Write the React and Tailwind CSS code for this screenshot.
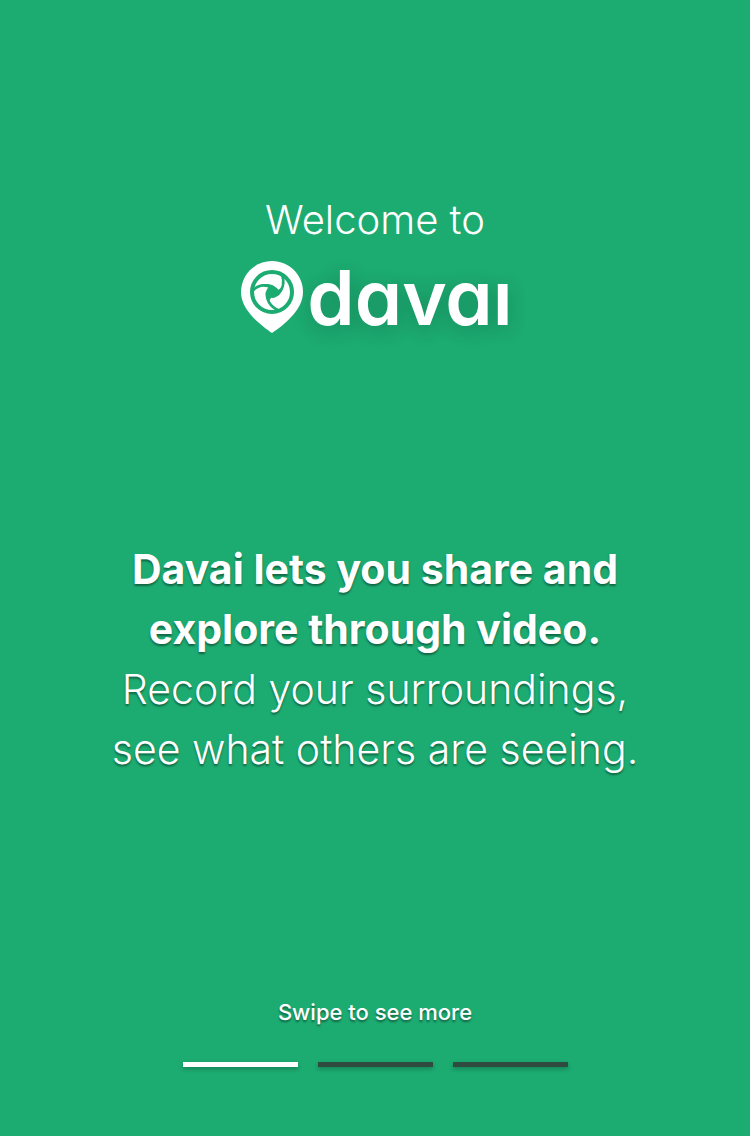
const shadow = "[text-shadow:0_2px_2px_rgba(0,0,0,0.4)]";

function Pin() {
  return (
    <svg viewBox="0 0 62 72" className="h-[72px] w-[62px] shrink-0" aria-hidden="true">
      <path
        fill="#fff"
        d="M31 0C13.900 0 0 13.900 0 31C0 40 4.500 47.500 10 54C16 61 25 68 31 72C37 68 46 61 52 54C57.500 47.500 62 40 62 31C62 13.900 48.100 0 31 0Z"
      />
      <circle cx="31" cy="31" r="20" fill="none" stroke="#1cab71" strokeWidth="4" />
      <g fill="none" stroke="#1cab71" strokeWidth="2.600">
        <path d="M12 29.500C16 25 22.500 22.500 31 26.500" />
        <path d="M41 14C44 21 42 29 36 34" />
        <path d="M26 31C25 38.500 29 45.500 37 49" />
      </g>
      <path
        fill="#1cab71"
        d="M22 23.300C27 22.300 33.500 23.500 37.300 28.800L42 26C41 31.500 37.500 35.500 32.500 37L30.500 36.800C29 37.500 28.500 39 28.600 42C25.500 39 24.300 34.500 25 31C25.500 28.500 27 27 27.500 26C26 24.800 24 24.500 22 24.500Z"
      />
    </svg>
  );
}

export default function App() {
  return (
    <main className="flex min-h-screen flex-col items-center bg-[#1cab71] px-6 pt-[190px] pb-[69px] text-center font-[Inter,sans-serif] text-white">
      <header className="flex flex-col items-center">
        <p className="text-[40px] leading-[60px] font-light">Welcome to</p>
        <h1 aria-label="davai" className="mt-[11px] flex items-center gap-1 pl-1">
          <Pin />
          <span className="text-[76px] leading-[72px] font-semibold [font-feature-settings:'cv11'] [text-shadow:0_4px_20px_rgba(0,0,0,0.2)]">
            davaı
          </span>
        </h1>
      </header>
      <p className={`mt-[206px] text-[41px] leading-[60px] font-light ${shadow}`}>
        <strong className="font-bold">
          Davai lets you share and
          <br />
          explore through video.
        </strong>
        <br />
        Record your surroundings,
        <br />
        see what others are seeing.
      </p>
      <footer className="mt-auto flex flex-col items-center gap-8">
        <p className={`text-[22px] leading-[36px] font-medium ${shadow}`}>Swipe to see more</p>
        <nav aria-label="Pages" className="flex gap-5">
          <button aria-label="Page 1" aria-current="true" className="h-[5px] w-[115px] bg-white shadow-[0_2px_4px_rgba(0,0,0,0.25)]" />
          <button aria-label="Page 2" className="h-[5px] w-[115px] bg-[#2f4b40] shadow-[0_2px_4px_rgba(0,0,0,0.25)]" />
          <button aria-label="Page 3" className="h-[5px] w-[115px] bg-[#2f4b40] shadow-[0_2px_4px_rgba(0,0,0,0.25)]" />
        </nav>
      </footer>
    </main>
  );
}
